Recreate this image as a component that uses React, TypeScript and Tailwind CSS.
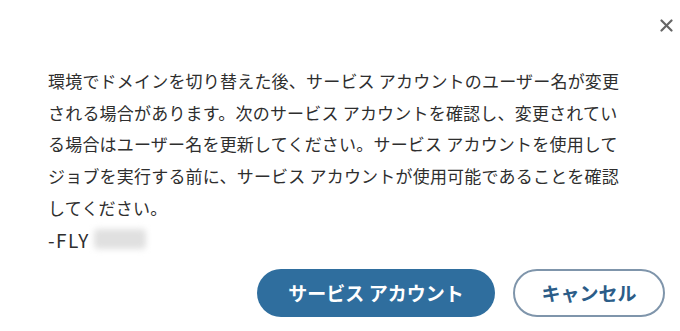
export default function App() {
  return (
    <div className="h-[331px] w-[680px] bg-white font-['Noto_Sans_CJK_JP',sans-serif] text-[#2e2e2e]">
      <div className="flex justify-end pr-[4px] pt-[15px]">
        {/* Close */}
        <button className="flex h-[20px] w-[20px] items-center justify-center text-[#666666]">
          <svg width="13" height="13" viewBox="0 0 13 13" fill="none">
            <line x1="1.5" y1="1.5" x2="11.5" y2="11.5" stroke="currentColor" strokeWidth="2.2" strokeLinecap="round" />
            <line x1="11.5" y1="1.5" x2="1.5" y2="11.5" stroke="currentColor" strokeWidth="2.2" strokeLinecap="round" />
          </svg>
        </button>
      </div>

      <div className="pl-[48px] pr-[40px] pt-[30px] text-[17px] leading-[31.7px] tracking-[0.2px]">
        <p>環境でドメインを切り替えた後、サービス アカウントのユーザー名が変更</p>
        <p>される場合があります。次のサービス アカウントを確認し、変更されてい</p>
        <p>る場合はユーザー名を更新してください。サービス アカウントを使用して</p>
        <p>ジョブを実行する前に、サービス アカウントが使用可能であることを確認</p>
        <p>してください。</p>
        <p className="flex items-center">
          <span className="text-[19px] tracking-[1.5px]">-FLY</span>
          <span className="ml-[4px] inline-block h-[20px] w-[52px] rounded-sm bg-[#e0e0e0] blur-[3px]" />
        </p>
      </div>

      <div className="mt-[14px] flex justify-end gap-[18px] pr-[15px]">
        <button className="h-[48px] w-[238px] rounded-full bg-[#2f6e9e] text-[19px] font-bold text-white">
          サービス アカウント
        </button>
        <button className="h-[48px] w-[152px] rounded-full border-2 border-[#7f95ab] bg-white text-[19px] font-bold text-[#2c5d88]">
          キャンセル
        </button>
      </div>
    </div>
  );
}
